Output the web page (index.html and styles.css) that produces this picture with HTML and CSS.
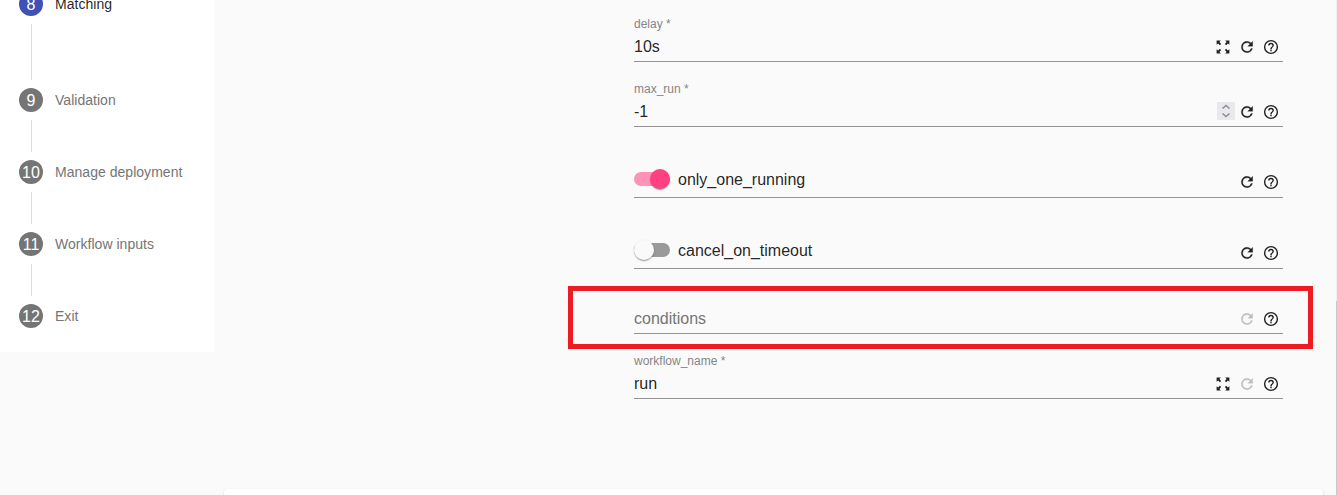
FILE: index.html
```html
<!DOCTYPE html>
<html lang="en">
<head>
<meta charset="utf-8">
<title>Matching</title>
<link rel="stylesheet" href="styles.css">
</head>
<body>
<svg class="defs" aria-hidden="true">
  <symbol id="expand" viewBox="-0.7 -0.7 25.4 25.4"><path d="M3 3h6L6.900 5.100l2.500 2.500-1.800 1.800-2.500-2.500L3 9zM21 3v6l-2.100-2.100-2.500 2.500-1.800-1.800 2.500-2.500L15 3zM3 21v-6l2.100 2.100 2.500-2.500 1.800 1.800-2.500 2.500L9 21zM21 21h-6l2.100-2.100-2.500-2.500 1.800-1.800 2.500 2.500L21 15z"/></symbol>
  <symbol id="refresh" viewBox="-0.7 -0.7 25.4 25.4"><path stroke="currentColor" stroke-width=".4" d="M17.65 6.35A7.96 7.96 0 0 0 12 4a8 8 0 1 0 7.73 10h-2.08A6 6 0 1 1 12 6c1.66 0 3.14.69 4.22 1.78L13 11h7V4l-2.35 2.35z"/></symbol>
  <symbol id="help" viewBox="-0.7 -0.7 25.4 25.4"><path d="M11 18h2v-2h-2v2zm1-16a10 10 0 1 0 0 20 10 10 0 0 0 0-20zm0 18a8 8 0 1 1 0-16 8 8 0 0 1 0 16zm0-14a4 4 0 0 0-4 4h2c0-1.100.9-2 2-2s2 .9 2 2c0 2-3 1.750-3 5h2c0-2.250 3-2.500 3-5a4 4 0 0 0-4-4z"/></symbol>
</svg>
<div class="page">
  <nav class="stepper">
    <div class="step active"><span class="num">8</span><span>Matching</span></div>
    <div class="line tall"></div>
    <div class="step"><span class="num">9</span><span>Validation</span></div>
    <div class="line"></div>
    <div class="step"><span class="num">10</span><span>Manage deployment</span></div>
    <div class="line"></div>
    <div class="step"><span class="num">11</span><span>Workflow inputs</span></div>
    <div class="line"></div>
    <div class="step"><span class="num">12</span><span>Exit</span></div>
  </nav>
  <main class="content">
    <form class="form">
      <div class="field">
        <label class="label">delay *</label>
        <div class="row"><span class="value">10s</span><svg class="icon"><use href="#expand"/></svg><svg class="icon"><use href="#refresh"/></svg><svg class="icon"><use href="#help"/></svg></div>
      </div>
      <div class="field">
        <label class="label">max_run *</label>
        <div class="row"><span class="value">-1</span><span class="spinner"><svg viewBox="0 0 18 18"><path d="M5.500 6.500L9 3.500l3.500 3M5.500 11.500l3.500 3 3.500-3"/></svg></span><svg class="icon"><use href="#refresh"/></svg><svg class="icon"><use href="#help"/></svg></div>
      </div>
      <div class="field toggle-field">
        <div class="row"><span class="toggle on"><i class="thumb"></i></span><span class="value">only_one_running</span><svg class="icon"><use href="#refresh"/></svg><svg class="icon"><use href="#help"/></svg></div>
      </div>
      <div class="field toggle-field">
        <div class="row"><span class="toggle"><i class="thumb"></i></span><span class="value">cancel_on_timeout</span><svg class="icon"><use href="#refresh"/></svg><svg class="icon"><use href="#help"/></svg></div>
      </div>
      <div class="field highlighted">
        <div class="row"><span class="value placeholder">conditions</span><svg class="icon disabled"><use href="#refresh"/></svg><svg class="icon"><use href="#help"/></svg></div>
      </div>
      <div class="field">
        <label class="label">workflow_name *</label>
        <div class="row"><span class="value">run</span><svg class="icon"><use href="#expand"/></svg><svg class="icon disabled"><use href="#refresh"/></svg><svg class="icon"><use href="#help"/></svg></div>
      </div>
    </form>
    <section class="card"></section>
  </main>
  <div class="scrollbar"><div class="scroll-thumb"></div></div>
</div>
</body>
</html>
```
FILE: styles.css
```css
*, *::after { box-sizing: border-box; }
body {
  margin: 0;
  overflow: hidden;
  background: #fafafa;
  color: rgba(0, 0, 0, .87);
  font-family: "Liberation Sans", Arial, sans-serif;
}
.defs { display: none; }
.page { display: flex; height: 495px; overflow: hidden; }

/* vertical stepper */
.stepper {
  flex: none;
  width: 214px;
  height: 360px;
  margin-top: -8px;
  padding-left: 19px;
  background: #fff;
}
.step {
  display: flex;
  align-items: center;
  gap: 12px;
  height: 24px;
  font-size: 14px;
  letter-spacing: .03px;
  color: #757575;
}
.step.active { color: rgba(0, 0, 0, .87); }
.num {
  flex: none;
  width: 24px;
  height: 24px;
  border-radius: 50%;
  background: #757575;
  color: #fff;
  font-size: 16px;
  line-height: 26px;
  text-align: center;
}
.active .num { background: #3f51b5; }
.line { width: 1px; height: 32px; margin: 8px 0 8px 12px; background: #dcdcdc; }
.line.tall { height: 56px; }

/* form */
.content { flex: 1; display: flex; flex-direction: column; padding: 0 13px 0 10px; }
.form { flex: none; width: 649px; height: 489px; margin-left: 410px; padding-top: 1px; }
.field {
  position: relative;
  display: flex;
  flex-direction: column;
  justify-content: flex-end;
  height: 65px;
  border-bottom: 1px solid #949494;
}
.field:first-child { height: 61px; }
.field.toggle-field { height: 71px; }
.label { font-size: 12px; line-height: 14px; color: #858585; margin-bottom: 7px; }
.row { display: flex; align-items: center; gap: 6px; height: 18px; margin-bottom: 5px; padding-right: 3px; }
.value { flex: 1; font-size: 16px; line-height: 18px; }
.placeholder { color: #757575; }
.toggle-field .row { height: 20px; margin-bottom: 8px; }
.toggle-field .value { padding-top: 2px; }
.toggle-field .icon { margin-top: 6px; }
.icon { flex: none; width: 18px; height: 18px; fill: #212121; color: #212121; }
.icon.disabled { fill: #bdbdbd; color: #bdbdbd; }
.spinner { width: 18px; height: 18px; margin: -2px -3px 0 0; background: #e9e9ed; }
.spinner svg { display: block; fill: none; stroke: #8f8f9d; stroke-width: 1.6; }
.toggle { position: relative; width: 36px; height: 14px; margin-right: 2px; border-radius: 7px; background: #9a9a9a; }
.toggle.on { background: #ff93b7; }
.thumb {
  position: absolute;
  top: -3px;
  left: 0;
  width: 20px;
  height: 20px;
  border-radius: 50%;
  background: #fafafa;
  box-shadow: 0 2px 1px -1px rgba(0, 0, 0, .2), 0 1px 1px rgba(0, 0, 0, .14), 0 1px 3px rgba(0, 0, 0, .12);
}
.on .thumb { left: 16px; background: #ff4081; }

/* red frame drawn over the conditions field */
.highlighted::after {
  content: "";
  position: absolute;
  left: -66px;
  right: -30px;
  top: 17px;
  height: 63px;
  border: 5px solid #ed1c24;
}
.card {
  flex: none;
  height: 60px;
  border-radius: 4px;
  background: #fff;
  box-shadow: 0 2px 1px -1px rgba(0, 0, 0, .2), 0 1px 1px rgba(0, 0, 0, .14), 0 1px 3px rgba(0, 0, 0, .12);
}
.scrollbar { width: 1px; padding-top: 301px; background: #f0f0f0; }
.scroll-thumb { height: 194px; background: #c8c8c8; }
```
